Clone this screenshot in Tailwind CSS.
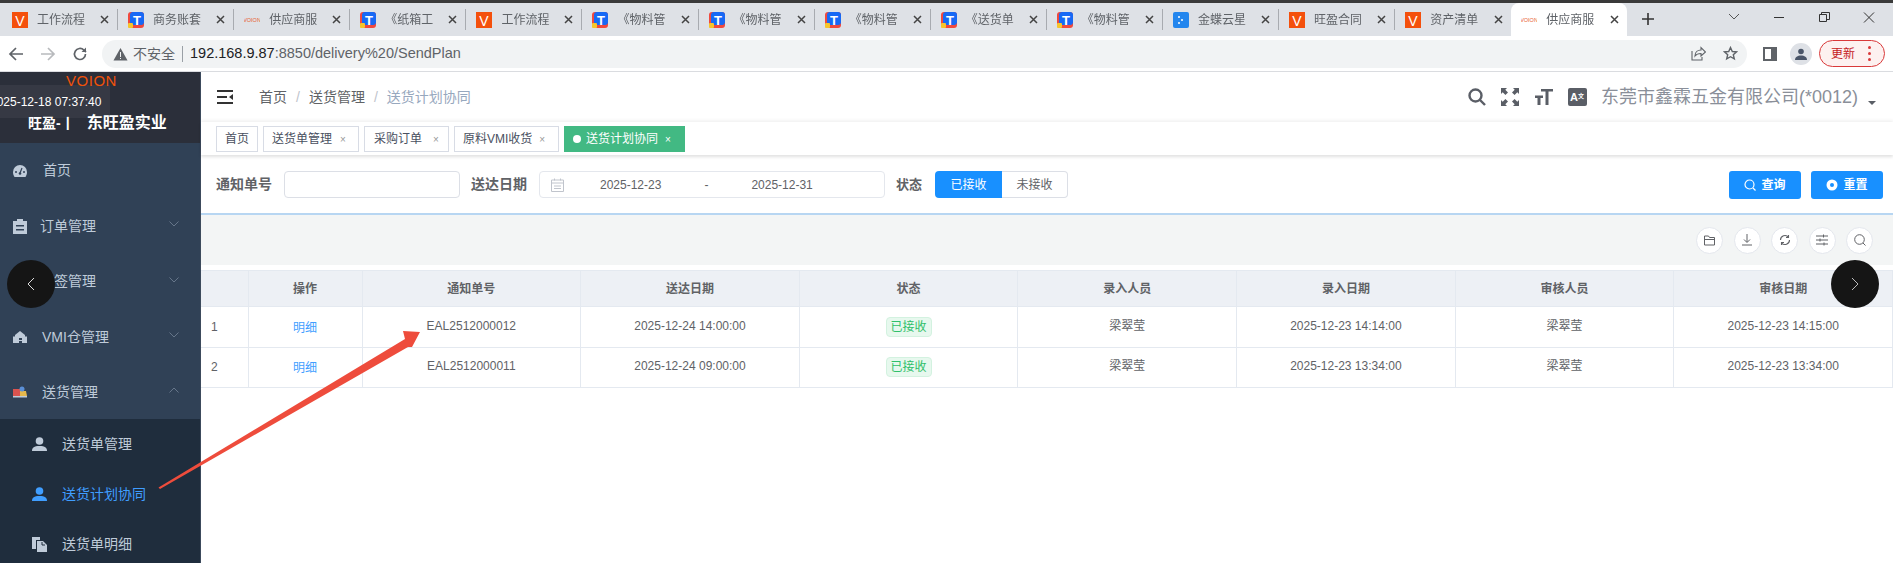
<!DOCTYPE html>
<html lang="zh-CN">
<head>
  <meta charset="UTF-8">
  <title>供应商服务</title>
  <script src="https://cdn.jsdelivr.net/npm/@tailwindcss/browser@4"></script>
</head>
<body class="bg-white overflow-hidden font-['Liberation_Sans','Noto_Sans_CJK_SC',sans-serif]">
<div class="relative w-[1893px] h-[563px] overflow-hidden flex flex-col">

  <!-- browser tabs -->
  <div class="h-[3px] bg-[#3a3a3a]"></div>
  <div class="h-[33px] bg-[#dee1e6] flex items-stretch pl-[2px] text-[#5f6368]">
    <div id="tabs" class="flex"></div>
    <svg class="ml-[13px] mt-[8px]" width="16" height="16" viewBox="0 0 16 16" fill="none" stroke="#333" stroke-width="1.6"><path d="M8 2v12M2 8h12"/></svg>
    <div class="ml-auto flex items-start pt-[9px] pr-[18px] gap-[33px]">
      <svg width="12" height="10" viewBox="0 0 12 10" fill="none" stroke="#555" stroke-width="1"><path d="M1 2l5 5 5-5"/></svg>
      <svg width="12" height="10" viewBox="0 0 12 10" stroke="#333"><path d="M1 5.5h10"/></svg>
      <svg width="12" height="10" viewBox="0 0 12 10" fill="none" stroke="#333"><path d="M1.5 2.5h7v7h-7zM3.5 2.5V.5h8v7h-3"/></svg>
      <svg width="12" height="11" viewBox="0 0 12 11" fill="none" stroke="#333"><path d="M1 .5l10 10M11 .5l-10 10"/></svg>
    </div>
  </div>

  <!-- address bar -->
  <div class="h-[35px] bg-white flex items-center border-b border-[#dadce0] box-content">
    <div class="w-[102px] flex items-center pl-[8px] gap-[16px] shrink-0">
      <svg width="16" height="16" viewBox="0 0 16 16" fill="none" stroke="#5f6368" stroke-width="1.7"><path d="M15 8H2M8 2L2 8l6 6"/></svg>
      <svg width="16" height="16" viewBox="0 0 16 16" fill="none" stroke="#b8babd" stroke-width="1.7"><path d="M1 8h13M8 2l6 6-6 6"/></svg>
      <svg width="16" height="16" viewBox="0 0 16 16" fill="none" stroke="#5f6368" stroke-width="1.7"><path d="M13.5 8a5.5 5.5 0 1 1-1.6-3.9L14 6"/><path d="M14 1.5V6H9.5" fill="#5f6368" stroke="none"/></svg>
    </div>
    <div class="w-[1645px] h-[28px] bg-[#f1f3f4] rounded-[14px] flex items-center pl-[11px] shrink-0">
      <svg width="15" height="14" viewBox="0 0 15 14"><path d="M7.5 1L14.5 13.5H.5z" fill="#5f6368"/><path d="M7 5h1v5H7zM7 11h1v1H7z" fill="#f1f3f4"/></svg>
      <span class="ml-[5px] text-[14px] text-[#5f6368] leading-none">不安全</span>
      <span class="mx-[7px] w-px h-[16px] bg-[#9aa0a6]"></span>
      <span class="text-[14.5px] text-[#5f6368] leading-none"><span class="text-[#202124]">192.168.9.87</span>:8850/delivery%20/SendPlan</span>
      <span class="ml-auto flex items-center gap-[17px] pr-[9px]">
        <svg width="15" height="15" viewBox="0 0 15 15" fill="none" stroke="#5f6368" stroke-width="1.1"><path d="M1 5v9h10v-3M4 10c0-4 3-6 6-6V1.500l4.500 4.500-4.500 4V7.500C7.500 7.500 5.500 8 4 10z"/></svg>
        <svg width="15" height="15" viewBox="0 0 15 15" fill="none" stroke="#5f6368" stroke-width="1.4"><path d="M7.500 1.500l1.800 4 4.200.4-3.200 2.800 1 4.200-3.800-2.200-3.800 2.200 1-4.200L1.500 5.900l4.200-.4z"/></svg>
      </span>
    </div>
    <svg class="ml-[16px]" width="14" height="14" viewBox="0 0 14 14"><path d="M0 0h14v14H0z" fill="#5f6368"/><path d="M2 2h6v10H2z" fill="#fff"/></svg>
    <span class="ml-[13px] w-[22px] h-[22px] rounded-full bg-[#dee1e6] flex items-center justify-center">
      <svg width="12" height="12" viewBox="0 0 12 12" fill="#4a5568"><circle cx="6" cy="3.500" r="2.800"/><path d="M0 12c0-3 2.500-4.500 6-4.500S12 9 12 12z"/></svg>
    </span>
    <span class="ml-[7px] w-[66px] h-[27px] rounded-[14px] border border-[#d9393a] bg-[#fdf1f0] flex items-center pl-[11px] text-[12px] text-[#c5221f]">更新<span class="ml-[13px] flex flex-col gap-[3px]"><i class="block w-[3px] h-[3px] rounded-full bg-[#d9393a]"></i><i class="block w-[3px] h-[3px] rounded-full bg-[#d9393a]"></i><i class="block w-[3px] h-[3px] rounded-full bg-[#d9393a]"></i></span></span>
  </div>

  <div class="flex flex-1 min-h-0">
    <!-- sidebar -->
    <aside class="w-[201px] shrink-0 bg-[#304156] text-[#bfcbd9] text-[14px] border-r border-[#3c4a5c]">
      <div class="h-[71px] bg-[#2b2f3a] overflow-hidden">
        <div class="h-[13px] text-center text-[#f0520a] text-[15px] leading-none pt-[1px] tracking-[0.5px] font-medium ml-[-17px]">VOION</div>
        <div class="w-[110px] h-[33px] bg-white/5 flex items-center text-white text-[12px] whitespace-nowrap -indent-[10px]">2025-12-18 07:37:40</div>
        <div class="mt-[-5px] pl-[28px] text-white font-bold text-[16px] leading-[20px] whitespace-nowrap"><span class="text-[14px]">旺盈-丨</span><span class="ml-[12px]">东旺盈实业</span></div>
      </div>
      <div class="flex h-[55.500px] items-center pl-[13px]">
        <svg width="14" height="12" viewBox="0 0 14 12" fill="#bfcbd9"><path d="M7 0a7 7 0 0 0-7 7c0 2 .6 3.500 1.500 5h11C13.400 10.500 14 9 14 7a7 7 0 0 0-7-7z"/><path d="M7 8l2-5" stroke="#304156" stroke-width="1.200"/><circle cx="3" cy="7" r="1" fill="#304156"/><circle cx="11" cy="7" r="1" fill="#304156"/><circle cx="7" cy="8.500" r="1.300" fill="#304156"/></svg>
        <span class="ml-[16px]">首页</span>
      </div>
      <div class="flex h-[55.500px] items-center pl-[13px]">
        <svg width="14" height="15" viewBox="0 0 14 15" fill="#bfcbd9"><path d="M0 2h4V0h6v2h4v13H0z"/><path d="M3 6h8v1.500H3zM3 10h8v1.500H3z" fill="#304156"/></svg>
        <span class="ml-[13px]">订单管理</span>
        <svg class="ml-auto mr-[21px] mb-[4px]" width="10" height="6" viewBox="0 0 10 6" fill="none" stroke="#66768a"><path d="M.5.5L5 5 9.500.5"/></svg>
      </div>
      <div class="flex h-[55.500px] items-center pl-[13px]">
        <span class="ml-[27px]">标签管理</span>
        <svg class="ml-auto mr-[21px] mb-[4px]" width="10" height="6" viewBox="0 0 10 6" fill="none" stroke="#66768a"><path d="M.5.5L5 5 9.500.5"/></svg>
      </div>
      <div class="flex h-[55.500px] items-center pl-[13px]">
        <svg width="14" height="12" viewBox="0 0 14 12" fill="#bfcbd9"><path d="M7 0l5 4v1.500h2V12H0V5.500h2V4z"/><path d="M6 7h3v2H6zM6 10h3v2H6z" fill="#304156"/></svg>
        <span class="ml-[15px]">VMI仓管理</span>
        <svg class="ml-auto mr-[21px] mb-[4px]" width="10" height="6" viewBox="0 0 10 6" fill="none" stroke="#66768a"><path d="M.5.5L5 5 9.500.5"/></svg>
      </div>
      <div class="flex h-[54px] items-center pl-[13px]">
        <svg width="14" height="12" viewBox="0 0 14 12"><path d="M0 3h7v7H0z" fill="#d9534f"/><path d="M7 5h6l1 5H7z" fill="#e6b84c"/><circle cx="9" cy="3" r="2.500" fill="#5b8fd6"/><path d="M0 10h14v1.500H0z" fill="#bfcbd9"/></svg>
        <span class="ml-[15px]">送货管理</span>
        <svg class="ml-auto mr-[21px] mb-[4px]" width="10" height="6" viewBox="0 0 10 6" fill="none" stroke="#66768a"><path d="M.5 5.500L5 1l4.500 4.500"/></svg>
      </div>
      <div class="bg-[#1f2d3d] h-[150px] overflow-hidden">
        <div class="flex h-[50px] items-center pl-[32px]">
          <svg width="15" height="14" viewBox="0 0 15 14" fill="#bfcbd9"><circle cx="7.500" cy="4" r="3.800"/><path d="M0 14c0-3.500 2-5 7.500-5s7.500 1.500 7.500 5z"/></svg>
          <span class="ml-[15px]">送货单管理</span>
        </div>
        <div class="flex h-[50px] items-center pl-[32px] text-[#409eff]">
          <svg width="15" height="14" viewBox="0 0 15 14" fill="#409eff"><circle cx="7.500" cy="4" r="3.800"/><path d="M0 14c0-3.500 2-5 7.500-5s7.500 1.500 7.500 5z"/></svg>
          <span class="ml-[15px]">送货计划协同</span>
        </div>
        <div class="flex h-[50px] items-center pl-[32px]">
          <svg width="15" height="15" viewBox="0 0 15 15" fill="#bfcbd9"><path d="M0 0h8v3H4v9H0z"/><path d="M5 4h6l4 4v7H5z"/><path d="M10 5v3h3" fill="none" stroke="#1f2d3d"/></svg>
          <span class="ml-[15px]">送货单明细</span>
        </div>
      </div>
    </aside>

    <main class="flex-1 min-w-0 flex flex-col">
      <!-- top nav -->
      <header class="h-[50px] flex items-center pl-[16px] pr-[17px] text-[14px]">
        <svg width="16" height="14" viewBox="0 0 16 14" fill="#333"><path d="M0 0h16v2H0zM0 12h16v2H0zM0 6h10v2H0zM16 4v6l-4-3z"/></svg>
        <span class="ml-[26px] text-[#606266]">首页</span>
        <span class="mx-[9px] text-[#c0c4cc]">/</span>
        <span class="text-[#606266]">送货管理</span>
        <span class="mx-[9px] text-[#c0c4cc]">/</span>
        <span class="text-[#97a8be]">送货计划协同</span>
        <div class="ml-auto flex items-center">
          <svg width="18" height="18" viewBox="0 0 18 18" fill="none" stroke="#5a5e66" stroke-width="2.400"><circle cx="7.500" cy="7.500" r="6"/><path d="M12 12l5 5"/></svg>
          <svg class="ml-[15px]" width="18" height="18" viewBox="0 0 18 18" fill="#5a5e66"><path d="M0 0h6L4.300 1.700 7 4.400 4.400 7 1.700 4.300 0 6zM18 0v6l-1.700-1.700L13.600 7 11 4.400l2.700-2.700L12 0zM0 18v-6l1.700 1.700L4.400 11 7 13.600l-2.700 2.700L6 18zM18 18h-6l1.700-1.700L11 13.600l2.600-2.600 2.700 2.700L18 12z"/></svg>
          <svg class="ml-[16px]" width="18" height="18" viewBox="0 0 18 18" fill="#5a5e66"><path d="M6 1h12v2.500h-4.500V17h-3V3.500H6zM0 7.500h8V10H5.500v7h-3v-7H0z"/></svg>
          <span class="ml-[15px] w-[19px] h-[18px] rounded-[2px] bg-[#5a5e66] text-white text-[11px] leading-[18px] pl-[2px] font-bold">A<sup class="text-[6px]">文</sup></span>
          <span class="ml-[14px] text-[18px] text-[#8a8f99] whitespace-nowrap">东莞市鑫霖五金有限公司(*0012)</span>
          <span class="ml-[10px] mt-[12px] border-x-[4px] border-t-[4px] border-x-transparent border-t-[#5a5e66]"></span>
        </div>
      </header>

      <!-- open tags -->
      <div class="h-[33px] shadow-[0_-2px_3px_rgba(0,0,0,0.05),0_2px_3px_rgba(0,0,0,0.12)] flex items-start gap-[5px] pl-[15px] pt-[4px] text-[12px] text-[#495060]">
        <span class="h-[26px] px-[8px] flex items-center border border-[#d8dce5] bg-white">首页</span>
        <span class="h-[26px] w-[96px] pl-[8px] flex items-center border border-[#d8dce5] bg-white">送货单管理<span class="ml-[8px] text-[10px] text-[#999]">×</span></span>
        <span class="h-[26px] w-[85px] pl-[9px] flex items-center border border-[#d8dce5] bg-white">采购订单<span class="ml-[11px] text-[10px] text-[#999]">×</span></span>
        <span class="h-[26px] w-[105px] pl-[8px] flex items-center border border-[#d8dce5] bg-white">原料VMI收货<span class="ml-[7px] text-[10px] text-[#999]">×</span></span>
        <span class="h-[26px] w-[121px] pl-[9px] flex items-center bg-[#42b983] text-white"><i class="w-[8px] h-[8px] rounded-full bg-white mr-[5px]"></i>送货计划协同<span class="ml-[7px] text-[10px]">×</span></span>
      </div>

      <!-- filter -->
      <div class="h-[60px] flex items-center pl-[15px] pr-[10px] text-[14px] border-b-2 border-[#b7d6f2] box-border pt-[1px]">
        <label class="font-bold text-[#606266]">通知单号</label>
        <span class="ml-[12px] w-[176px] h-[27px] rounded-[4px] border border-[#dcdfe6]"></span>
        <label class="ml-[11px] font-bold text-[#606266]">送达日期</label>
        <div class="ml-[12px] w-[346px] h-[27px] rounded-[4px] border border-[#e4e7ed] flex items-center pl-[11px] text-[12px] text-[#606266]">
          <svg width="13" height="14" viewBox="0 0 13 14" fill="none" stroke="#c0c4cc"><path d="M.5 2h12v11.500H.5zM.5 5h12M3.500 .5v2M9.500 .5v2M3 8h7M3 10.500h7"/></svg>
          <span class="ml-[36px]">2025-12-23</span>
          <span class="ml-[43px]">-</span>
          <span class="ml-[43px]">2025-12-31</span>
        </div>
        <label class="ml-[11px] font-bold text-[#606266] text-[13px]">状态</label>
        <div class="ml-[13px] flex text-[12px] h-[27px]">
          <span class="w-[67px] flex items-center justify-center rounded-l-[4px] bg-[#1890ff] text-white">已接收</span>
          <span class="w-[66px] flex items-center justify-center rounded-r-[4px] border border-l-0 border-[#dcdfe6] text-[#606266]">未接收</span>
        </div>
        <button class="ml-auto w-[72px] h-[28px] rounded-[3px] bg-[#1890ff] text-white text-[12px] font-bold flex items-center justify-center gap-[5px]">
          <svg width="12" height="12" viewBox="0 0 12 12" fill="none" stroke="#fff" stroke-width="1.200"><circle cx="5.500" cy="5.500" r="4.500"/><path d="M9 9l2.500 2.500"/></svg>查询
        </button>
        <button class="ml-[10px] w-[72px] h-[28px] rounded-[3px] bg-[#1890ff] text-white text-[12px] font-bold flex items-center justify-center gap-[5px]">
          <svg width="12" height="12" viewBox="0 0 12 12"><circle cx="6" cy="6" r="5.500" fill="#fff"/><circle cx="6" cy="6" r="2" fill="#1890ff"/></svg>重置
        </button>
      </div>

      <!-- toolbar -->
      <div class="h-[50px] bg-[#f3f5f5] flex items-center justify-end gap-[10.500px] pr-[20px]">
        <span class="w-[27px] h-[27px] rounded-full bg-white border border-[#e4e7ed] flex items-center justify-center"><svg width="12" height="11" viewBox="0 0 12 11" fill="none" stroke="#606266"><path d="M.5 10V1h4l1 1.500h5V10zM.5 4.500h10"/></svg></span>
        <span class="w-[27px] h-[27px] rounded-full bg-white border border-[#e4e7ed] flex items-center justify-center"><svg width="12" height="12" viewBox="0 0 12 12" fill="none" stroke="#606266"><path d="M6 0v8M3 5.500L6 8.500l3-3M1 11h10"/></svg></span>
        <span class="w-[27px] h-[27px] rounded-full bg-white border border-[#e4e7ed] flex items-center justify-center"><svg width="12" height="12" viewBox="0 0 12 12" fill="none" stroke="#606266" stroke-width="1.100"><path d="M1.500 6a4.500 4.500 0 0 1 8-2.800M10.500 6a4.500 4.500 0 0 1-8 2.800M9.500 1v2.500H7M2.500 11V8.500H5"/></svg></span>
        <span class="w-[27px] h-[27px] rounded-full bg-white border border-[#e4e7ed] flex items-center justify-center"><svg width="12" height="12" viewBox="0 0 12 12" fill="none" stroke="#606266"><path d="M0 2h12M0 6h12M0 10h12M7.500 .5v3M4 4.500v3M8 8.500v3"/></svg></span>
        <span class="w-[27px] h-[27px] rounded-full bg-white border border-[#e4e7ed] flex items-center justify-center"><svg width="12" height="12" viewBox="0 0 12 12" fill="none" stroke="#606266"><circle cx="5.500" cy="5.500" r="4.800"/><path d="M9 9l2.500 2.500"/></svg></span>
      </div>

      <!-- table -->
      <div class="mt-[5px] text-[12px] text-[#606266]">
        <table class="w-full table-fixed border-collapse">
          <colgroup><col class="w-[47px]"><col class="w-[114px]"><col span="7"></colgroup>
          <thead class="bg-[#edf0f5]">
            <tr class="h-[36px] font-bold">
              <th class="border border-l-0 border-[#e4e9f0]"></th><th class="border border-[#e4e9f0]">操作</th><th class="border border-[#e4e9f0]">通知单号</th><th class="border border-[#e4e9f0]">送达日期</th><th class="border border-[#e4e9f0]">状态</th><th class="border border-[#e4e9f0]">录入人员</th><th class="border border-[#e4e9f0]">录入日期</th><th class="border border-[#e4e9f0]">审核人员</th><th class="border border-[#e4e9f0]">审核日期</th>
            </tr>
          </thead>
          <tbody class="text-center">
            <tr class="h-[40.500px]">
              <td class="border border-l-0 border-[#e4e9f0] text-left pl-[10px]">1</td><td class="border border-[#e4e9f0] text-[#409eff] pt-[2px]">明细</td><td class="border border-[#e4e9f0] pb-[2px]">EAL2512000012</td><td class="border border-[#e4e9f0] pb-[2px]">2025-12-24 14:00:00</td><td class="border border-[#e4e9f0]"><span class="inline-block h-[20px] leading-[18px] px-[4px] rounded-[4px] bg-[#e7f8ee] border border-[#d3f2e0] text-[#2fc06a]">已接收</span></td><td class="border border-[#e4e9f0] pb-[2px]">梁翠莹</td><td class="border border-[#e4e9f0] pb-[2px]">2025-12-23 14:14:00</td><td class="border border-[#e4e9f0] pb-[2px]">梁翠莹</td><td class="border border-[#e4e9f0] pb-[2px]">2025-12-23 14:15:00</td>
            </tr>
            <tr class="h-[40px]">
              <td class="border border-l-0 border-[#e4e9f0] text-left pl-[10px]">2</td><td class="border border-[#e4e9f0] text-[#409eff] pt-[2px]">明细</td><td class="border border-[#e4e9f0] pb-[2px]">EAL2512000011</td><td class="border border-[#e4e9f0] pb-[2px]">2025-12-24 09:00:00</td><td class="border border-[#e4e9f0]"><span class="inline-block h-[20px] leading-[18px] px-[4px] rounded-[4px] bg-[#e7f8ee] border border-[#d3f2e0] text-[#2fc06a]">已接收</span></td><td class="border border-[#e4e9f0] pb-[2px]">梁翠莹</td><td class="border border-[#e4e9f0] pb-[2px]">2025-12-23 13:34:00</td><td class="border border-[#e4e9f0] pb-[2px]">梁翠莹</td><td class="border border-[#e4e9f0] pb-[2px]">2025-12-23 13:34:00</td>
            </tr>
          </tbody>
        </table>
      </div>
    </main>
  </div>

  <!-- carousel buttons and annotation arrow lie over the screenshot -->
  <div class="absolute left-[7px] top-[260px] w-[48px] h-[48px] rounded-full bg-[#151515] flex items-center justify-center">
    <svg width="8" height="14" viewBox="0 0 8 14" fill="none" stroke="#ddd"><path d="M7 1L1 7l6 6"/></svg>
  </div>
  <div class="absolute left-[1831px] top-[260px] w-[48px] h-[48px] rounded-full bg-[#151515] flex items-center justify-center">
    <svg width="8" height="14" viewBox="0 0 8 14" fill="none" stroke="#bbb"><path d="M1 1l6 6-6 6"/></svg>
  </div>
  <svg class="absolute left-0 top-0 pointer-events-none" width="1893" height="563" viewBox="0 0 1893 563">
    <polygon points="158.500,487.500 405,339 403,331 420,332 412,347 408,347 160,489" fill="#ee4c3c"/>
  </svg>
</div>

<script>
  // browser tab strip
  const icons = {
    v: '<svg width="16" height="16" viewBox="0 0 16 16"><rect width="16" height="16" fill="#f4500c"/><text x="8" y="13.500" text-anchor="middle" font-size="14" fill="#fff" font-family="Liberation Sans">V</text></svg>',
    t: '<svg width="16" height="16" viewBox="0 0 16 16"><rect width="16" height="16" rx="3" fill="#f0493e"/><rect x="2" y="0" width="14" height="13" rx="3" fill="#1769f5"/><rect x="0" y="11" width="5" height="5" rx="1" fill="#f7c52b"/><text x="9" y="12.500" text-anchor="middle" font-size="13" font-weight="bold" fill="#fff" font-family="Liberation Sans">T</text></svg>',
    o: '<svg width="16" height="16" viewBox="0 0 16 16"><text x="8" y="10" text-anchor="middle" font-size="5.500" fill="#e8602f" font-family="Liberation Sans">VOION</text></svg>',
    k: '<svg width="16" height="16" viewBox="0 0 16 16"><rect width="16" height="16" rx="2" fill="#2386ee"/><circle cx="6" cy="5" r="1" fill="#fff"/><circle cx="9" cy="8" r="1" fill="#fff"/><circle cx="6" cy="11" r="1" fill="#fff"/></svg>'
  };
  const tabs = [
    ['v', '工作流程'], ['t', '商务账套'], ['o', '供应商服'], ['t', '《纸箱工'],
    ['v', '工作流程'], ['t', '《物料管'], ['t', '《物料管'], ['t', '《物料管'],
    ['t', '《送货单'], ['t', '《物料管'], ['k', '金蝶云星'], ['v', '旺盈合同'],
    ['v', '资产清单'], ['o', '供应商服']
  ];
  document.getElementById('tabs').innerHTML = tabs.map((tab, i) => {
    const active = i === tabs.length - 1;
    const last = i >= tabs.length - 2;
    return `<div class="w-[116.100px] flex items-center pl-[10px] pr-[8px] h-full ${active ? 'bg-white rounded-t-[8px]' : ''} ${last ? '' : 'border-r border-[#a8abb0] [border-image:linear-gradient(transparent_20%,#a8abb0_20%,#a8abb0_80%,transparent_80%)_1]'}">
      <span class="shrink-0">${icons[tab[0]]}</span>
      <span class="ml-[9px] w-[54px] overflow-hidden whitespace-nowrap text-[12px] [mask-image:linear-gradient(90deg,#000_85%,transparent)]">${tab[1]}</span>
      <svg class="ml-auto shrink-0" width="9" height="9" viewBox="0 0 9 9" stroke="#444" stroke-width="1.500"><path d="M1 1l7 7M8 1L1 8"/></svg>
    </div>`;
  }).join('');
</script>
</body>
</html>
